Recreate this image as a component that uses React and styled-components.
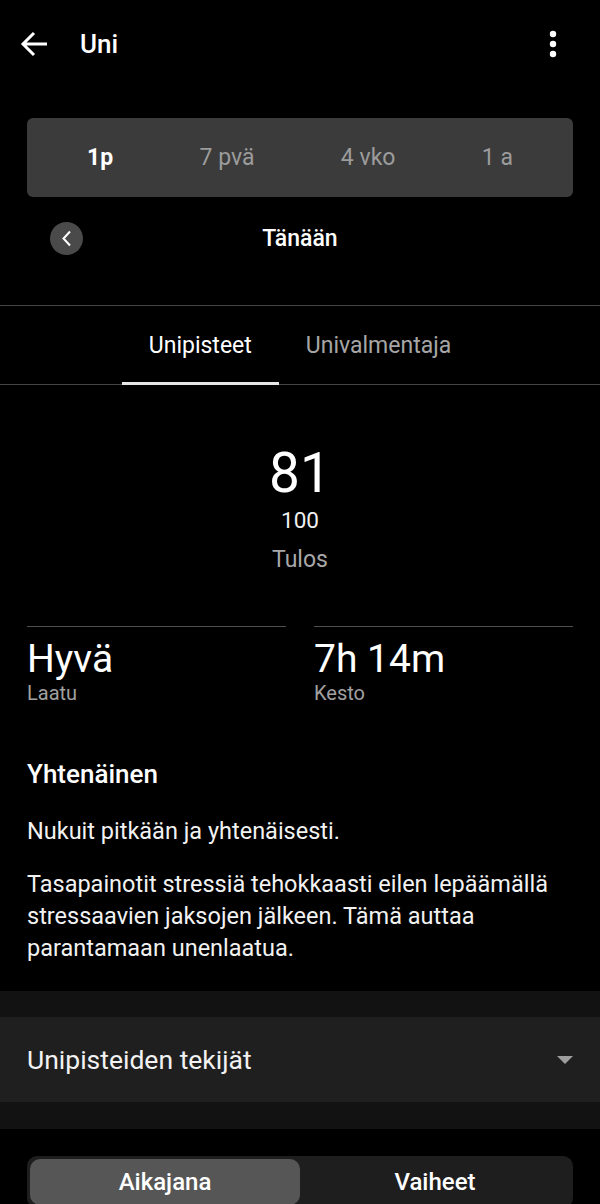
import React from "react";
import styled, { createGlobalStyle } from "styled-components";

const Global = createGlobalStyle`
  html, body {
    margin: 0;
    padding: 0;
    background: #000;
    overflow: hidden;
  }
  body {
    font-family: Roboto, "Noto Sans", "Liberation Sans", sans-serif;
    color: #f4f4f4;
    -webkit-font-smoothing: antialiased;
  }
  * { box-sizing: border-box; }
`;

const Page = styled.div`
  width: 600px;
  background: #000;
`;

const Header = styled.header`
  height: 88px;
  display: flex;
  align-items: center;
  padding: 0 23px 0 20px;
`;

const Title = styled.h1`
  margin: 0 0 0 32px;
  flex: 1;
  font-size: 26px;
  font-weight: 500;
  color: #fff;
`;

const IconBtn = styled.button`
  background: none;
  border: 0;
  padding: 0;
  width: ${(p) => p.$w || 28}px;
  display: flex;
  align-items: center;
  justify-content: center;
  color: #fff;
`;

const RangeBar = styled.div`
  margin: 30px 27px 0;
  height: 79px;
  padding: 0 60px;
  background: #3b3b3b;
  border-radius: 6px;
  display: flex;
  justify-content: space-between;
  align-items: center;
`;

const RangeItem = styled.div`
  font-size: 23px;
  font-weight: ${(p) => (p.$active ? 700 : 400)};
  color: ${(p) => (p.$active ? "#fff" : "#9c9c9c")};
`;

const DateRow = styled.div`
  margin: 25px 27px 0;
  height: 33px;
  display: grid;
  grid-template-columns: 1fr auto 1fr;
  align-items: center;
`;

const RoundBtn = styled.button`
  margin-left: 23px;
  width: 33px;
  height: 33px;
  border-radius: 50%;
  border: 0;
  padding: 0;
  background: #4a4a4a;
  display: flex;
  align-items: center;
  justify-content: center;
  justify-self: start;
`;

const DateLabel = styled.div`
  font-size: 23px;
  font-weight: 500;
  color: #fff;
`;

const TabBar = styled.nav`
  margin-top: 50px;
  height: 80px;
  border-top: 1px solid #454545;
  border-bottom: 1px solid #454545;
  display: flex;
  justify-content: center;
`;

const Tab = styled.div`
  padding: 2px 27px 0;
  display: flex;
  align-items: center;
  font-size: 23px;
  font-weight: 400;
  color: ${(p) => (p.$active ? "#fff" : "#a6a6a6")};
  border-bottom: 3px solid ${(p) => (p.$active ? "#e6e6e6" : "transparent")};
  margin-bottom: -1px;
`;

const Score = styled.section`
  margin-top: 56px;
  display: flex;
  flex-direction: column;
  align-items: center;
`;

const ScoreValue = styled.div`
  font-size: 55px;
  line-height: 64px;
  font-weight: 400;
  color: #fff;
`;

const ScoreMax = styled.div`
  margin-top: 2px;
  font-size: 22.5px;
  line-height: 26px;
  color: #f0f0f0;
`;

const ScoreLabel = styled.div`
  margin-top: 14px;
  font-size: 23px;
  line-height: 26px;
  color: #a8a8a8;
`;

const Stats = styled.section`
  margin: 53px 27px 0;
  display: grid;
  grid-template-columns: 1fr 1fr;
  column-gap: 28px;
`;

const Stat = styled.div`
  border-top: 1px solid #4e4e4e;
  padding-top: 10px;
`;

const StatValue = styled.div`
  font-size: 39px;
  line-height: 44px;
  color: #fff;
`;

const StatLabel = styled.div`
  font-size: 20px;
  line-height: 24px;
  color: #a0a0a0;
`;

const Summary = styled.section`
  margin: 54px 27px 27px;
`;

const SummaryTitle = styled.h2`
  margin: 0;
  font-size: 26px;
  line-height: 30px;
  font-weight: 500;
  color: #fff;
`;

const Text = styled.p`
  margin: ${(p) => p.$gap}px 0 0;
  font-size: 23.5px;
  line-height: ${(p) => p.$lh}px;
  color: #f2f2f2;
`;

const Band = styled.div`
  background: #121212;
  padding: 26px 0 27px;
`;

const Accordion = styled.div`
  height: 85px;
  background: #1f1f1f;
  display: flex;
  align-items: center;
  justify-content: space-between;
  padding: 0 27px;
  font-size: 26.5px;
  color: #f2f2f2;
`;

const Switch = styled.div`
  margin: 27px 27px 0;
  height: 52px;
  padding: 3px;
  background: #1e1e1e;
  border-radius: 10px;
  display: grid;
  grid-template-columns: 1fr 1fr;
`;

const SwitchItem = styled.div`
  display: flex;
  align-items: center;
  justify-content: center;
  border-radius: 10px;
  background: ${(p) => (p.$active ? "#565656" : "transparent")};
  font-size: 24px;
  font-weight: 500;
  color: #fff;
`;

const ranges = ["1p", "7 pvä", "4 vko", "1 a"];

export default function App() {
  return (
    <Page>
      <Global />
      <Header>
        <IconBtn aria-label="Takaisin">
          <svg width="28" height="26" viewBox="0 0 28 26">
            <path d="M27 13H3M14 2L3 13l11 11" fill="none" stroke="#fff" strokeWidth="3" />
          </svg>
        </IconBtn>
        <Title>Uni</Title>
        <IconBtn aria-label="Lisää" $w={48}>
          <svg width="8" height="28" viewBox="0 0 8 28">
            <circle cx="4" cy="4" r="3.2" fill="#fff" />
            <circle cx="4" cy="14" r="3.2" fill="#fff" />
            <circle cx="4" cy="24" r="3.2" fill="#fff" />
          </svg>
        </IconBtn>
      </Header>

      <RangeBar>
        {ranges.map((r, i) => (
          <RangeItem key={r} $active={i === 0}>{r}</RangeItem>
        ))}
      </RangeBar>

      <DateRow>
        <RoundBtn aria-label="Edellinen">
          <svg width="12" height="17" viewBox="0 0 12 17">
            <path d="M9 1.5L2.5 8.5 9 15.5" fill="none" stroke="#fff" strokeWidth="2" />
          </svg>
        </RoundBtn>
        <DateLabel>Tänään</DateLabel>
      </DateRow>

      <TabBar>
        <Tab $active>Unipisteet</Tab>
        <Tab>Univalmentaja</Tab>
      </TabBar>

      <Score>
        <ScoreValue>81</ScoreValue>
        <ScoreMax>100</ScoreMax>
        <ScoreLabel>Tulos</ScoreLabel>
      </Score>

      <Stats>
        <Stat>
          <StatValue>Hyvä</StatValue>
          <StatLabel>Laatu</StatLabel>
        </Stat>
        <Stat>
          <StatValue>7h 14m</StatValue>
          <StatLabel>Kesto</StatLabel>
        </Stat>
      </Stats>

      <Summary>
        <SummaryTitle>Yhtenäinen</SummaryTitle>
        <Text $gap={27} $lh={30}>Nukuit pitkään ja yhtenäisesti.</Text>
        <Text $gap={22} $lh={32}>
          Tasapainotit stressiä tehokkaasti eilen lepäämällä stressaavien jaksojen jälkeen. Tämä auttaa parantamaan unenlaatua.
        </Text>
      </Summary>

      <Band>
        <Accordion>
          <span>Unipisteiden tekijät</span>
          <svg width="16" height="8" viewBox="0 0 16 8">
            <path d="M0 0h16L8 8z" fill="#9e9e9e" />
          </svg>
        </Accordion>
      </Band>

      <Switch>
        <SwitchItem $active>Aikajana</SwitchItem>
        <SwitchItem>Vaiheet</SwitchItem>
      </Switch>
    </Page>
  );
}
